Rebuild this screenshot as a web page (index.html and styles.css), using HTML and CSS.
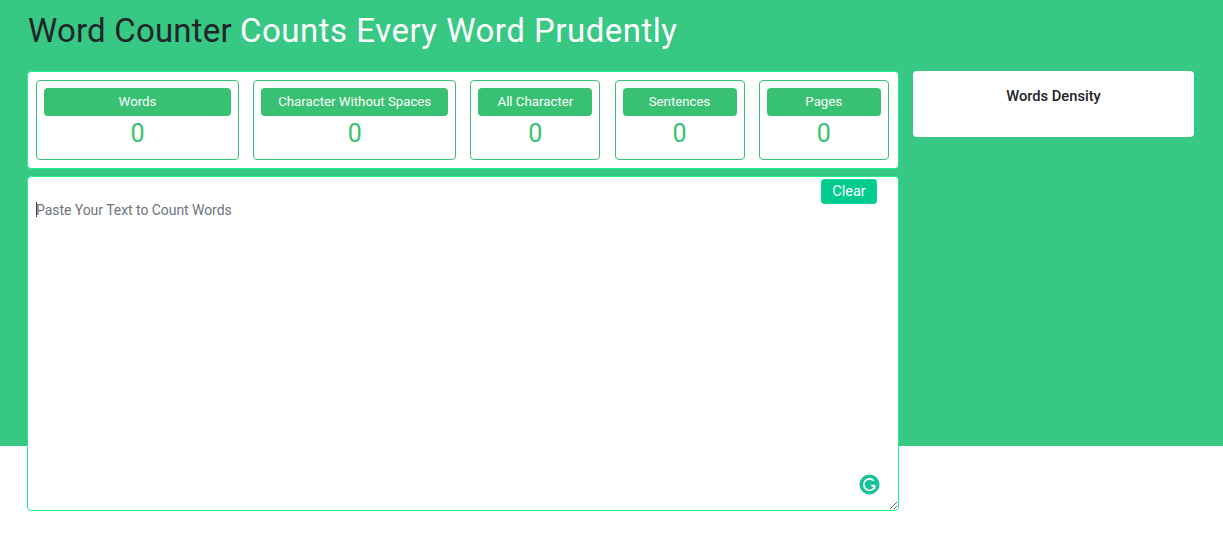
FILE: index.html
```html
<!DOCTYPE html>
<html lang="en">
<head>
<meta charset="utf-8">
<title>Word Counter</title>
<link rel="stylesheet" href="styles.css">
</head>
<body>
<main class="hero">
  <h1 class="title"><span class="title-dark">Word Counter</span> <span class="title-light">Counts Every Word Prudently</span></h1>
  <div class="columns">
    <div class="main-col">
      <section class="stats">
        <div class="stat wide"><div class="stat-label">Words</div><div class="stat-value">0</div></div>
        <div class="stat wide"><div class="stat-label">Character Without Spaces</div><div class="stat-value">0</div></div>
        <div class="stat"><div class="stat-label">All Character</div><div class="stat-value">0</div></div>
        <div class="stat"><div class="stat-label">Sentences</div><div class="stat-value">0</div></div>
        <div class="stat"><div class="stat-label">Pages</div><div class="stat-value">0</div></div>
      </section>
      <section class="editor">
        <textarea class="input" placeholder="Paste Your Text to Count Words"></textarea>
        <span class="caret"></span>
        <button class="clear" type="button">Clear</button>
        <svg class="grammarly" viewBox="0 0 22 22" width="21" height="21" aria-hidden="true">
          <circle cx="11" cy="11" r="10.5" fill="#15c39a"/>
          <path d="M15.4 7A6 6 0 1 0 16.8 12.6" fill="none" stroke="#fff" stroke-width="1.7"/>
          <path d="M11.6 11.2H17V15.8Z" fill="#fff"/>
        </svg>
      </section>
    </div>
    <aside class="density"><h2 class="density-title">Words Density</h2></aside>
  </div>
</main>
</body>
</html>
```
FILE: styles.css
```css
* { box-sizing: border-box; }
html, body { margin: 0; padding: 0; }
body { font-family: Roboto, "Liberation Sans", sans-serif; background: #fff; color: #212529; height: 539px; overflow: hidden; }
.hero { background: #37c884; height: 446px; padding: 0 29px 0 27px; }
.title { margin: 0; padding: 12px 0 0 1px; height: 71px; font-size: 33px; line-height: 38px; font-weight: 400; color: #fff; white-space: nowrap; }
.title-dark { color: #212529; letter-spacing: 0.2px; }
.title-light { letter-spacing: 0.5px; }
.columns { display: flex; gap: 14px; align-items: flex-start; }
.main-col { width: 872px; display: flex; flex-direction: column; gap: 7px; }
.stats { display: grid; grid-template-columns: 203px 203px 130px 130px 130px; column-gap: 14.2px; background: #fff; border: 1px solid #1cf08f; border-radius: 4px; padding: 8px 8px 7px; height: 98px; }
.stat { border: 1px solid #37c177; border-radius: 4px; padding: 7px; height: 80px; text-align: center; }
.stat-label { background: #38c172; color: #fff; border-radius: 4px; height: 28px; font-size: 13.25px; line-height: 27px; font-weight: 400; }
.stat-value { color: #38c172; font-size: 25px; line-height: 36px; font-weight: 400; }
.editor { position: relative; height: 335px; }
.input { display: block; width: 100%; height: 100%; background: #fff; border: 1px solid #1cf08f; border-radius: 4px; outline: none; padding: 23px 8px 8px; font-family: Roboto, sans-serif; font-size: 14px; line-height: 21px; letter-spacing: -0.05px; color: #495057; }
.input::placeholder { color: #6c757d; opacity: 1; }
.caret { position: absolute; left: 9px; top: 26px; width: 1px; height: 15px; background: #444; }
.clear { position: absolute; top: 3px; right: 22px; width: 56px; height: 25px; padding: 0; background: #00cc8f; border: 1px solid #0fd79b; border-radius: 3px; color: #fff; font-family: Roboto, sans-serif; font-size: 14.5px; }
.grammarly { position: absolute; right: 19px; bottom: 16px; }
.density { width: 281px; height: 66px; background: #fff; border-radius: 4px; text-align: center; padding: 17px 0 0; }
.density-title { margin: 0; font-size: 14.7px; line-height: 17px; font-weight: 500; color: #212529; }
```
